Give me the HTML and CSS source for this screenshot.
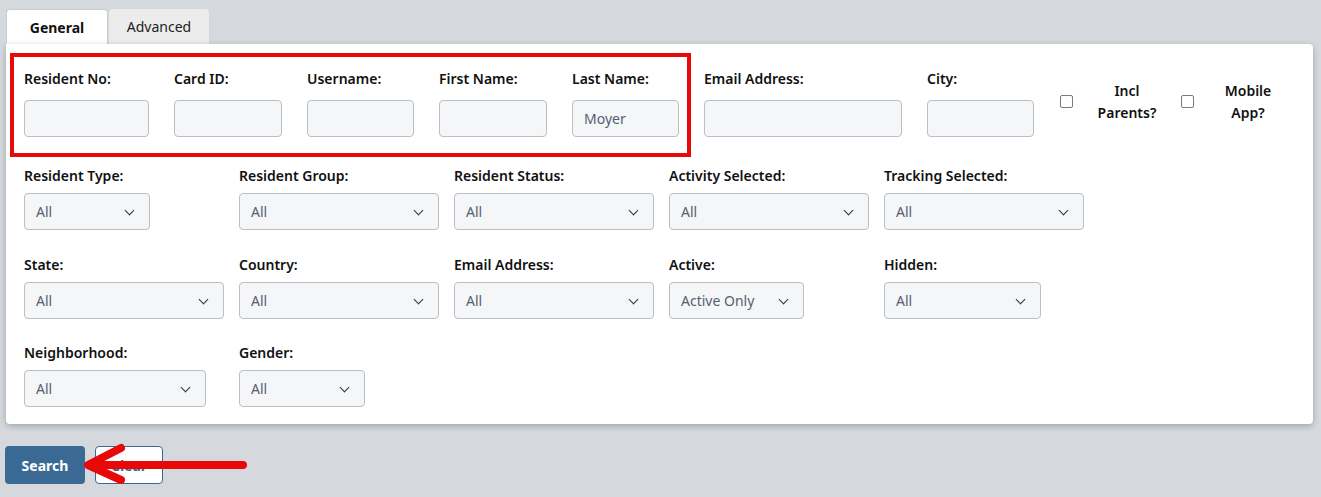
FILE: index.html
```html
<!DOCTYPE html>
<html lang="en">
<head>
  <meta charset="UTF-8" />
  <title>Resident Search</title>
  <link rel="stylesheet" href="styles.css">
</head>
<body>
  <div class="page">
    <div class="tabs">
      <div class="tab active">General</div>
      <div class="tab">Advanced</div>
    </div>

    <div class="card">
      <div class="row row-top">
        <div class="field"><label>Resident No:</label><input class="w125" type="text"></div>
        <div class="field"><label>Card ID:</label><input class="w108" type="text"></div>
        <div class="field"><label>Username:</label><input class="w107" type="text"></div>
        <div class="field"><label>First Name:</label><input class="w108" type="text"></div>
        <div class="field"><label>Last Name:</label><input class="w107" type="text" value="Moyer"></div>
        <div class="field"><label>Email Address:</label><input class="w198" type="text"></div>
        <div class="field"><label>City:</label><input class="w107" type="text"></div>
        <div class="check-group">
          <span class="checkbox"></span>
          <span class="check-label">Incl<br>Parents?</span>
          <span class="checkbox"></span>
          <span class="check-label">Mobile<br>App?</span>
        </div>
      </div>

      <div class="row row-grid">
        <div class="cell"><label>Resident Type:</label><div class="select w126">All</div></div>
        <div class="cell"><label>Resident Group:</label><div class="select">All</div></div>
        <div class="cell"><label>Resident Status:</label><div class="select">All</div></div>
        <div class="cell"><label>Activity Selected:</label><div class="select">All</div></div>
        <div class="cell"><label>Tracking Selected:</label><div class="select">All</div></div>
      </div>

      <div class="row row-grid">
        <div class="cell"><label>State:</label><div class="select">All</div></div>
        <div class="cell"><label>Country:</label><div class="select">All</div></div>
        <div class="cell"><label>Email Address:</label><div class="select">All</div></div>
        <div class="cell"><label>Active:</label><div class="select w135">Active Only</div></div>
        <div class="cell"><label>Hidden:</label><div class="select w157">All</div></div>
      </div>

      <div class="row row-grid">
        <div class="cell"><label>Neighborhood:</label><div class="select w182">All</div></div>
        <div class="cell"><label>Gender:</label><div class="select w126">All</div></div>
      </div>

      <!-- annotation box -->
      <div class="highlight"></div>
    </div>

    <div class="actions">
      <button class="btn btn-primary">Search</button>
      <button class="btn btn-outline">Clear</button>
      <svg class="arrow" width="180" height="44" viewBox="0 0 180 44">
        <path d="M164 22 L12 22 M42 5 L9 22 L42 37" fill="none" stroke="#e80808" stroke-width="8" stroke-linecap="round" stroke-linejoin="round"/>
      </svg>
    </div>
  </div>
</body>
</html>
```

FILE: styles.css
```css
body {
  margin: 0;
  background: #d5d9de;
  font-family: 'Noto Sans', 'Open Sans', sans-serif;
  font-size: 14px;
  color: #111;
}

.page {
  padding: 9px 8px 0 6px;
}

.tabs {
  display: flex;
  gap: 1px;
}

.tab {
  width: 100px;
  height: 35px;
  line-height: 36px;
  text-align: center;
  background: #ececec;
  border-radius: 4px 4px 0 0;
  color: #222;
}

.tab.active {
  width: 102px;
  background: #fff;
  font-weight: 700;
  border: 1px solid #c9cdd2;
  border-bottom: none;
  box-sizing: border-box;
  color: #111;
}

.card {
  position: relative;
  background: #fff;
  padding: 25px 18px 17px;
  box-shadow: 0 2px 6px rgba(0, 0, 0, 0.25);
  border-radius: 0 4px 4px 4px;
}

.row {
  display: flex;
  align-items: flex-start;
}

.row-top {
  gap: 25px;
}

.row-grid {
  gap: 15px;
}

label {
  display: block;
  font-weight: 600;
  line-height: 20px;
  white-space: nowrap;
}

.field input {
  display: block;
  margin-top: 11px;
  height: 37px;
  box-sizing: border-box;
  border: 1px solid #b9bfc7;
  border-radius: 4px;
  background: #f5f6f8;
  padding: 0 11px;
  font-family: inherit;
  font-size: 14px;
  color: #55606e;
}

.w107 { width: 107px; }
.w108 { width: 108px; }
.w125 { width: 125px; }
.w198 { width: 198px; }

.check-group {
  display: flex;
  align-items: center;
  margin: 11px 0 0 1px;
}

.checkbox {
  width: 13px;
  height: 13px;
  box-sizing: border-box;
  border: 1px solid #767b82;
  border-radius: 2px;
  margin-top: -2px;
}

.check-label {
  width: 108px;
  text-align: center;
  font-weight: 600;
  line-height: 22px;
}

.row-grid:nth-of-type(2) {
  margin-top: 29px;
}

.row-grid + .row-grid {
  margin-top: 24px;
}

.row-grid:nth-of-type(3) {
  margin-top: 25px;
}

.cell {
  width: 200px;
}

.select {
  position: relative;
  margin-top: 7px;
  width: 200px;
  height: 37px;
  line-height: 35px;
  box-sizing: border-box;
  border: 1px solid #b9bfc7;
  border-radius: 4px;
  background: #f5f6f8;
  padding: 0 11px;
  color: #55606e;
}

.select::after {
  content: '';
  position: absolute;
  right: 16px;
  top: 13px;
  width: 6px;
  height: 6px;
  border-right: 1.6px solid #333;
  border-bottom: 1.6px solid #333;
  transform: rotate(45deg);
}

.w126 { width: 126px; }
.w135 { width: 135px; }
.w157 { width: 157px; }
.w182 { width: 182px; }

.highlight {
  position: absolute;
  left: 4px;
  top: 9px;
  width: 681px;
  height: 104px;
  box-sizing: border-box;
  border: 4px solid #e60a0a;
}

.actions {
  position: relative;
  display: flex;
  gap: 10px;
  margin: 22px 0 0 -1px;
}

.btn {
  height: 38px;
  border-radius: 4px;
  font-family: inherit;
  font-size: 14px;
  font-weight: 700;
  cursor: pointer;
}

.btn-primary {
  width: 80px;
  background: #3a6a93;
  border: none;
  color: #fff;
}

.btn-outline {
  width: 68px;
  background: #fff;
  border: 1px solid #3a6a93;
  color: #3a6a93;
}

.arrow {
  position: absolute;
  left: 74px;
  top: -3px;
}
```
